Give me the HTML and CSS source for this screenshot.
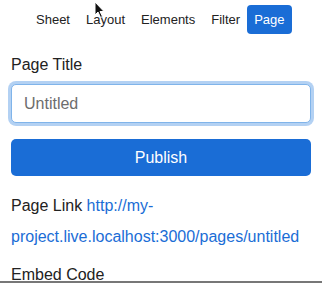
FILE: index.html
```html
<!DOCTYPE html>
<html lang="en">

<head>
    <meta charset="UTF-8">
    <meta name="viewport" content="width=device-width, initial-scale=1.0">
    <title>Page settings</title>
    <link rel="stylesheet" href="styles.css">
</head>

<body>
    <div class="panel">
        <nav class="tabs">
            <a class="tab">Sheet</a>
            <a class="tab">Layout</a>
            <a class="tab">Elements</a>
            <a class="tab">Filter</a>
            <a class="tab active">Page</a>
        </nav>

        <div class="page-form">
            <label class="field-label" for="page-title">Page Title</label>
            <input id="page-title" class="text-input" type="text" placeholder="Untitled">

            <button class="publish-button">Publish</button>

            <p class="page-link">Page Link <a href="#">http://my-project.live.localhost:3000/pages/untitled</a></p>

            <p class="field-label embed">Embed Code</p>
        </div>

        <svg class="cursor" width="12" height="18" viewBox="0 0 12 18">
            <path d="M1 1 L1 14 L4 11 L6.5 16.5 L8.5 15.5 L6 10.5 L10 10.5 Z" fill="#111" stroke="#fff" stroke-width="1"/>
        </svg>
    </div>
</body>

</html>
```

FILE: styles.css
```css
body {
    margin: 0;
    font-family: 'Liberation Sans', Arial, sans-serif;
    background: #fff;
    color: #222;
}

.panel {
    position: relative;
    height: 283px;
    overflow: hidden;
    box-sizing: border-box;
    border-bottom: 2px solid #777;
}

.tabs {
    display: flex;
    align-items: center;
    gap: 4px;
    padding: 5px 0 0 30px;
}

.tab {
    font-size: 13px;
    color: #222;
    padding: 6px 6px;
    border-radius: 4px;
}

.tab.active {
    background: #1a6dd6;
    color: #fff;
    padding: 7px 7px;
    margin-left: -3px;
}

.page-form {
    padding: 22px 11px 0;
}

.field-label {
    display: block;
    font-size: 16px;
    margin: 0 0 10px;
}

.text-input {
    display: block;
    width: 100%;
    box-sizing: border-box;
    height: 39px;
    padding: 0 12px;
    font-family: inherit;
    font-size: 16px;
    color: #222;
    border: 1px solid #80b4ea;
    border-radius: 5px;
    box-shadow: 0 0 0 3px rgba(116, 172, 234, 0.55);
    outline: none;
}

.text-input::placeholder {
    color: #6d6d6d;
}

.publish-button {
    display: block;
    width: 100%;
    height: 37px;
    margin-top: 16px;
    border: none;
    border-radius: 5px;
    background: #1a6dd6;
    color: #fff;
    font-family: inherit;
    font-size: 16px;
    cursor: pointer;
}

.page-link {
    font-size: 16px;
    line-height: 31px;
    margin: 14px 0 0;
}

.page-link a {
    color: #1a6dd6;
    text-decoration: none;
}

.embed {
    margin-top: 14px;
}

.cursor {
    position: absolute;
    left: 94px;
    top: 1px;
}
```
